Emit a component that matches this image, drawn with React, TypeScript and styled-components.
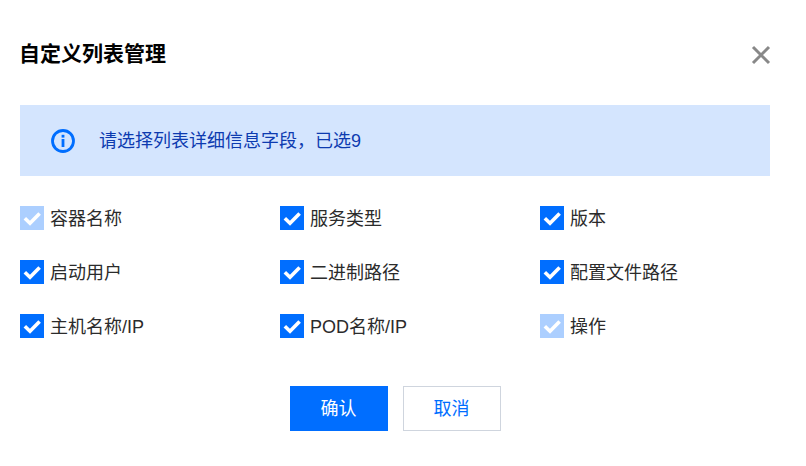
import React from "react";
import styled, { createGlobalStyle } from "styled-components";

const Global = createGlobalStyle`
  html, body { margin: 0; padding: 0; background: #fff; }
  body { font-family: "Liberation Sans", "Noto Sans CJK SC", sans-serif; }
`;

const Dialog = styled.div`
  width: 806px;
  height: 466px;
  box-sizing: border-box;
  padding: 38px 36px 0 20px;
  display: flex;
  flex-direction: column;
  overflow: hidden;
`;

const Header = styled.div`
  display: flex;
  justify-content: space-between;
  align-items: center;
  height: 32px;
  margin-bottom: 35px;
`;

const Title = styled.h2`
  margin: 0 0 1px -1px;
  font-size: 21px;
  line-height: 31px;
  font-weight: 700;
  color: #000;
`;

const Close = styled.button`
  border: 0;
  background: none;
  padding: 0;
  margin: 0 -1px 0 0;
  width: 20px;
  height: 20px;
  display: flex;
  color: #888;
  position: relative;
  top: 1px;
`;

const Alert = styled.div`
  height: 71px;
  background: #d4e5fe;
  display: flex;
  align-items: center;
  padding-left: 31px;
  gap: 24px;
  font-size: 18px;
  color: #0d3bb0;
`;

const AlertText = styled.span`
  padding-bottom: 3px;
`;

const Grid = styled.div`
  display: grid;
  grid-template-columns: repeat(3, 260px);
  grid-auto-rows: 24px;
  row-gap: 30px;
  margin-top: 30px;
`;

const Item = styled.label`
  display: flex;
  align-items: center;
  gap: 6px;
  font-size: 18px;
  line-height: 26px;
  color: #2b2b2b;
  white-space: nowrap;
`;

const Label = styled.span`
  padding-top: 2px;
`;

const Box = styled.span<{ $disabled?: boolean }>`
  width: 24px;
  height: 24px;
  flex: none;
  display: flex;
  background: ${(p) => (p.$disabled ? "#accfff" : "#006eff")};
`;

const Footer = styled.div`
  display: flex;
  justify-content: center;
  gap: 15px;
  margin-top: 48px;
`;

const Primary = styled.button`
  width: 98px;
  height: 45px;
  border: 0;
  padding: 0 0 3px;
  background: #006eff;
  color: #fff;
  font: inherit;
  font-size: 18px;
`;

const Secondary = styled.button`
  width: 98px;
  height: 45px;
  box-sizing: border-box;
  padding: 0 0 3px;
  border: 1px solid #cfd5de;
  background: #fff;
  color: #006eff;
  font: inherit;
  font-size: 18px;
`;

const Check = () => (
  <svg width="24" height="24" viewBox="0 0 24 24" fill="none">
    <path d="M4.8 12.3 10 17.3 19.6 7.4" stroke="#fff" strokeWidth="3.6" />
  </svg>
);

const items: [string, boolean?][] = [
  ["容器名称", true],
  ["服务类型"],
  ["版本"],
  ["启动用户"],
  ["二进制路径"],
  ["配置文件路径"],
  ["主机名称/IP"],
  ["POD名称/IP"],
  ["操作", true],
];

export default function App() {
  return (
    <>
      <Global />
      <Dialog>
        <Header>
          <Title>自定义列表管理</Title>
          <Close aria-label="关闭">
            <svg width="20" height="20" viewBox="0 0 20 20" fill="none">
              <path d="M2 2 18 18M18 2 2 18" stroke="currentColor" strokeWidth="3" />
            </svg>
          </Close>
        </Header>
        <Alert>
          <svg width="24" height="24" viewBox="0 0 24 24" fill="none">
            <circle cx="12" cy="12" r="10.5" stroke="#006eff" strokeWidth="2.8" />
            <rect x="10.6" y="5.8" width="2.8" height="2.8" fill="#006eff" />
            <rect x="10.6" y="10" width="2.8" height="8" fill="#006eff" />
          </svg>
          <AlertText>请选择列表详细信息字段，已选9</AlertText>
        </Alert>
        <Grid>
          {items.map(([label, disabled]) => (
            <Item key={label}>
              <Box $disabled={disabled}>
                <Check />
              </Box>
              <Label>{label}</Label>
            </Item>
          ))}
        </Grid>
        <Footer>
          <Primary>确认</Primary>
          <Secondary>取消</Secondary>
        </Footer>
      </Dialog>
    </>
  );
}
